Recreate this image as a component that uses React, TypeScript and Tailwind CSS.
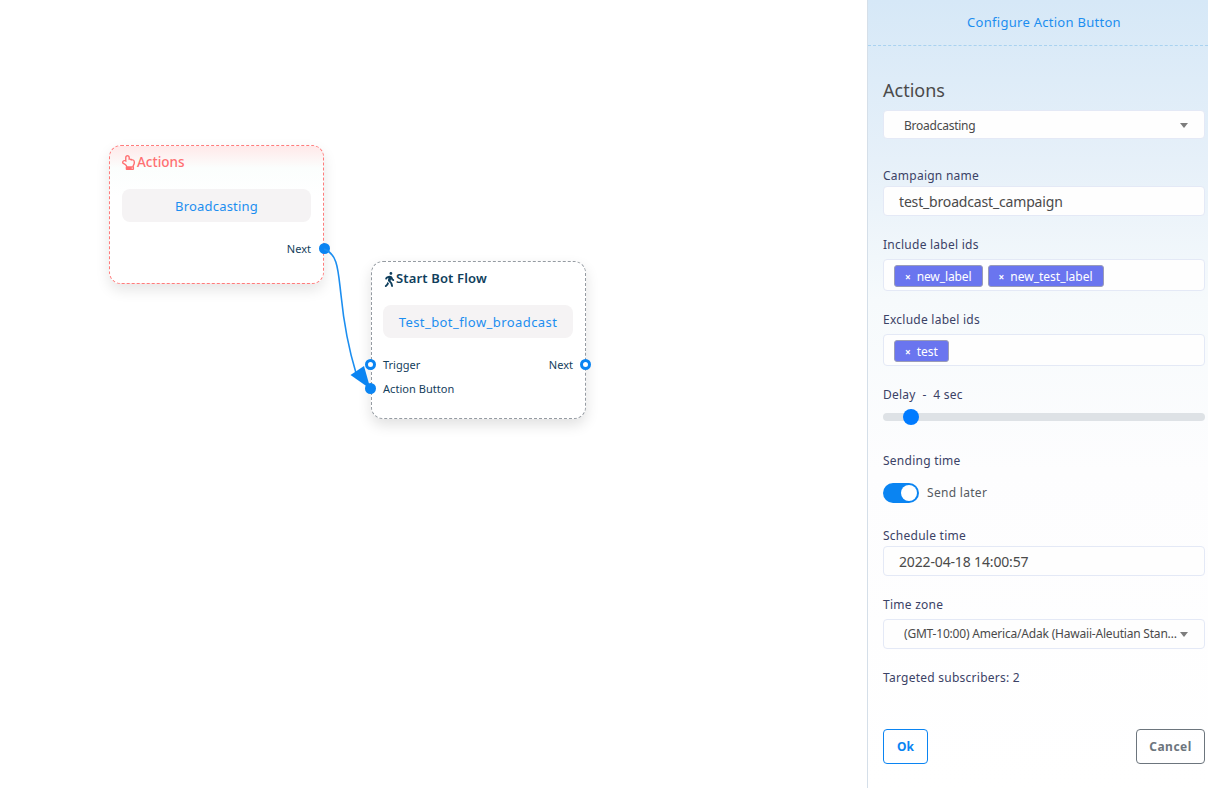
import { FaRegHandPointUp, FaWalking } from "react-icons/fa";

const font = "font-['Noto_Sans','Open_Sans',sans-serif]";

const FieldLabel = ({ text, className }: { text: string; className: string }) => (
  <div className={`h-4 text-[12px] leading-[18px] tracking-[0.25px] text-[#3b4266] ${className}`}>{text}</div>
);

const Caret = () => (
  <span className="ml-auto h-0 w-0 shrink-0 border-x-[4.5px] border-t-[5px] border-x-transparent border-t-[#7d7d7d]" />
);

const Tag = ({ text, className = "" }: { text: string; className?: string }) => (
  <span
    className={`mt-[2px] flex h-[22px] items-center gap-[6px] rounded-[3px] border border-[#9a9cb8] bg-[#6a75ef] pl-[10px] pr-[10px] pt-px text-[12px] text-white ${className}`}
  >
    <span className="text-[10px] font-bold leading-none">×</span>
    {text}
  </span>
);

const Handle = ({ filled, className }: { filled?: boolean; className: string }) => (
  <span
    className={`absolute h-[11px] w-[11px] rounded-full ${
      filled ? "bg-[#0a84f2]" : "border-[3px] border-[#0a84f2] bg-white"
    } ${className}`}
  />
);

const App = () => {
  return (
    <div className={`flex h-[788px] w-[1208px] overflow-hidden bg-white ${font}`}>
      <div className="relative w-[867px] shrink-0">
        {/* actions node */}
        <div className="absolute left-[109px] top-[145px] h-[139px] w-[215px] rounded-xl border border-dashed border-[#ff7c7c] bg-[linear-gradient(#ffe9e9,#fbfefd_22px,#ffffff_50px)] shadow-[0_6px_14px_rgba(0,0,0,0.1)]">
          <div className="ml-3 mt-[8px] flex h-4 items-center gap-[2px] text-[13.5px] font-medium text-[#ff7072]">
            <FaRegHandPointUp className="h-[15px] w-[13px]" />
            Actions
          </div>
          <div className="mx-3 mt-[19px] flex h-[33px] items-center justify-center rounded-lg bg-[#f5f3f4] pt-[2px] text-[13px] tracking-[0.2px] text-[#1c8ef0]">
            Broadcasting
          </div>
          <div className="mr-3 mt-[19px] h-4 text-right text-[11px] leading-4 text-[#14405c]">Next</div>
          <Handle filled className="right-[-7px] top-[97px]" />
        </div>

        {/* start bot flow node */}
        <div className="absolute left-[371px] top-[261px] h-[158px] w-[215px] rounded-xl border border-dashed border-[#959ba2] bg-white shadow-[0_6px_14px_rgba(0,0,0,0.12)]">
          <div className="ml-[11px] mt-[9px] flex h-4 items-center text-[13px] font-semibold tracking-[0.15px] text-[#0f3e5c]">
            <FaWalking className="h-[15px] w-[13px]" />
            Start Bot Flow
          </div>
          <div className="ml-[11px] mr-3 mt-[18px] flex h-[33px] items-center justify-center rounded-lg bg-[#f5f3f4] pt-[2px] text-[13px] tracking-[0.43px] text-[#1c8ef0]">
            Test_bot_flow_broadcast
          </div>
          <div className="ml-[11px] mr-3 mt-[19px] flex h-4 justify-between text-[11px] leading-4 text-[#14405c]">
            <span>Trigger</span>
            <span>Next</span>
          </div>
          <div className="mx-[11px] mt-2 h-4 text-[11px] leading-4 tracking-[0.05px] text-[#14405c]">Action Button</div>
          <Handle className="left-[-7px] top-[97px]" />
          <Handle className="right-[-6px] top-[97px]" />
          <Handle filled className="left-[-7px] top-[121px]" />
        </div>

        {/* edge */}
        <svg className="absolute left-0 top-0" width="867" height="788" fill="none">
          <path d="M324 249C338 254 338 270 341 295C344 325 349 350 356 373" stroke="#1c8ef0" strokeWidth="1.6" />
          <path d="M370.5 389L350.5 375L364 366Z" fill="#0a84f2" />
        </svg>
      </div>

      <aside className="flex w-[341px] shrink-0 flex-col border-l border-[#d5dfe9] bg-[linear-gradient(#d6e8f7,#e6f0f9_160px,#f6fafc_300px,#fdfdfe_470px,#ffffff)]">
        <div className="flex h-[46px] shrink-0 items-center justify-center border-b border-dashed border-[#a9d2f0] pl-[12px] text-[13px] tracking-[0.28px] text-[#1c8ef0]">
          Configure Action Button
        </div>

        <div className="flex flex-col pl-[15px] pr-[3px]">
          <div className="mt-[32px] h-6 text-[18px] leading-[25px] text-[#4a4a4a]">Actions</div>
          <div className="mt-2 flex h-[29px] items-center rounded border border-[#e4e9f6] bg-[#fefefe] pl-[20px] pr-[16px] pt-[2px] text-[12px] tracking-[-0.25px] text-[#4a4a4a]">
            Broadcasting
            <Caret />
          </div>

          <FieldLabel text="Campaign name" className="mt-[28px]" />
          <div className="mt-[3px] flex h-[30px] items-center rounded border border-[#e4e9f6] bg-[#fefefe] px-[15px] text-[14px] tracking-[-0.17px] text-[#4a4a4a]">
            test_broadcast_campaign
          </div>

          <FieldLabel text="Include label ids" className="mt-5" />
          <div className="mt-[7px] flex h-[32px] items-center gap-[5px] rounded border border-[#e4e9f6] bg-[#fefefe] pl-[10px]">
            <Tag text="new_label" className="tracking-[-0.1px]" />
            <Tag text="new_test_label" />
          </div>

          <FieldLabel text="Exclude label ids" className="mt-5" />
          <div className="mt-[7px] flex h-[32px] items-center gap-[5px] rounded border border-[#e4e9f6] bg-[#fefefe] pl-[10px]">
            <Tag text="test" />
          </div>

          <FieldLabel text="Delay  -  4 sec" className="mt-5 whitespace-pre" />
          <div className="relative mt-[11px] h-2 rounded-full bg-[#dee2e6]">
            <span className="absolute left-[20px] top-[-4px] h-4 w-4 rounded-full bg-[#007bff]" />
          </div>

          <FieldLabel text="Sending time" className="mt-[31px]" />
          <div className="mt-[15px] flex h-5 items-center gap-2">
            <span className="flex h-5 w-9 items-center justify-end rounded-full bg-[#0a84f2] pr-[2px]">
              <span className="h-4 w-4 rounded-full bg-white" />
            </span>
            <span className="text-[12px] tracking-[0.3px] text-[#555a60]">Send later</span>
          </div>

          <FieldLabel text="Schedule time" className="mt-6" />
          <div className="mt-[3px] flex h-[30px] items-center rounded border border-[#e4e9f6] bg-[#fefefe] px-[15px] text-[14px] tracking-[-0.15px] text-[#4a4a4a]">
            2022-04-18 14:00:57
          </div>

          <FieldLabel text="Time zone" className="mt-5" />
          <div className="mt-[7px] flex h-[30px] items-center rounded border border-[#e4e9f6] bg-[#fefefe] pl-[20px] pr-[16px] text-[12px] tracking-[-0.2px] text-[#4a4a4a]">
            <span className="truncate">(GMT-10:00) America/Adak (Hawaii-Aleutian Stan…</span>
            <Caret />
          </div>

          <FieldLabel text="Targeted subscribers: 2" className="mt-5" />

          <div className="mt-[44px] flex justify-between">
            <button className="h-[35px] w-[45px] rounded border border-[#0a84f2] text-[12px] font-bold text-[#0a84f2]">Ok</button>
            <button className="h-[35px] w-[69px] rounded border border-[#6c757d] text-[12px] font-bold tracking-[0.5px] text-[#6c757d]">Cancel</button>
          </div>
        </div>
      </aside>
    </div>
  );
};

export default App;
